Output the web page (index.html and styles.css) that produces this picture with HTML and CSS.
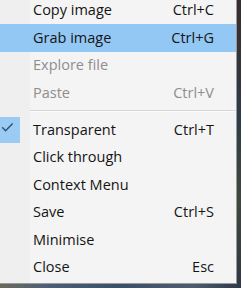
FILE: index.html
```html
<!DOCTYPE html>
<html>
<head>
<meta charset="utf-8">
<link rel="stylesheet" href="styles.css">
</head>
<body>
<div class="screen">
  <div class="menu">
    <ul class="items">
      <li class="item"><span class="gutter"></span><span class="label">Copy image</span><span class="key">Ctrl+C</span></li>
      <li class="item hot"><span class="gutter"></span><span class="label">Grab image</span><span class="key">Ctrl+G</span></li>
      <li class="item disabled"><span class="gutter"></span><span class="label">Explore file</span><span class="key"></span></li>
      <li class="item disabled"><span class="gutter"></span><span class="label">Paste</span><span class="key">Ctrl+V</span></li>
      <li class="sep"></li>
      <li class="item"><span class="gutter"><span class="check"><svg width="20" height="26" viewBox="0 0 20 26"><path d="M2.2 10.2 L5.6 13.8 L12.6 6.4" fill="none" stroke="#34506c" stroke-width="1.4"/></svg></span></span><span class="label">Transparent</span><span class="key">Ctrl+T</span></li>
      <li class="item"><span class="gutter"></span><span class="label">Click through</span><span class="key"></span></li>
      <li class="item"><span class="gutter"></span><span class="label">Context Menu</span><span class="key"></span></li>
      <li class="item"><span class="gutter"></span><span class="label">Save</span><span class="key">Ctrl+S</span></li>
      <li class="item"><span class="gutter"></span><span class="label">Minimise</span><span class="key"></span></li>
      <li class="item"><span class="gutter"></span><span class="label">Close</span><span class="key">Esc</span></li>
    </ul>
  </div>
  <div class="desk-right"></div>
</div>
<div class="desk-bottom"></div>
</body>
</html>
```
FILE: styles.css
```css
html, body {
  margin: 0;
  padding: 0;
}
body {
  width: 241px;
  height: 288px;
  overflow: hidden;
  background: #3a4350;
  font-family: "Segoe UI", "Open Sans", "Noto Sans", sans-serif;
  font-size: 14.5px;
}
.screen {
  display: flex;
  height: 284px;
}
.menu {
  width: 237px;
  height: 284px;
  box-sizing: border-box;
  border-right: 1px solid #9a9a9a;
  border-bottom: 1px solid #9a9a9a;
  background: linear-gradient(to right, #efefef 0, #efefef 30px, #f4f4f4 30px);
  overflow: hidden;
}
.items {
  list-style: none;
  margin: -3.5px 0 0 0;
  padding: 0;
}
.item {
  display: grid;
  grid-template-columns: 33px 1fr auto;
  align-items: center;
  height: 27.5px;
  padding-right: 22px;
  padding-bottom: 1px;
  box-sizing: border-box;
  color: #151515;
}
.item.hot {
  background: #93c8f4;
}
.item.disabled {
  color: #8e8e8e;
}
.gutter {
  display: flex;
  align-self: stretch;
  align-items: center;
}
.check {
  display: block;
  width: 20px;
  height: 26px;
  margin-top: 1px;
  background: #9acbf3;
}
.check svg {
  display: block;
}
.label {
  white-space: nowrap;
}
.key {
  white-space: nowrap;
  text-align: right;
}
.sep {
  height: 9.5px;
  margin-left: 30px;
  display: flex;
  align-items: center;
}
.sep::before {
  content: "";
  display: block;
  width: 100%;
  height: 1px;
  background: #d6d6d6;
  border-bottom: 1px solid #fbfbfb;
}
.desk-right {
  flex: 1;
  background: linear-gradient(to bottom, #3a2c2c 0, #2e3a4a 40%, #3c4a3a 70%, #2f3846 100%);
}
.desk-bottom {
  height: 4px;
  background: linear-gradient(to right, #6b6a5a 0, #4a607a 20%, #39506a 50%, #4d5d70 80%, #2c3a48 100%);
}
```
